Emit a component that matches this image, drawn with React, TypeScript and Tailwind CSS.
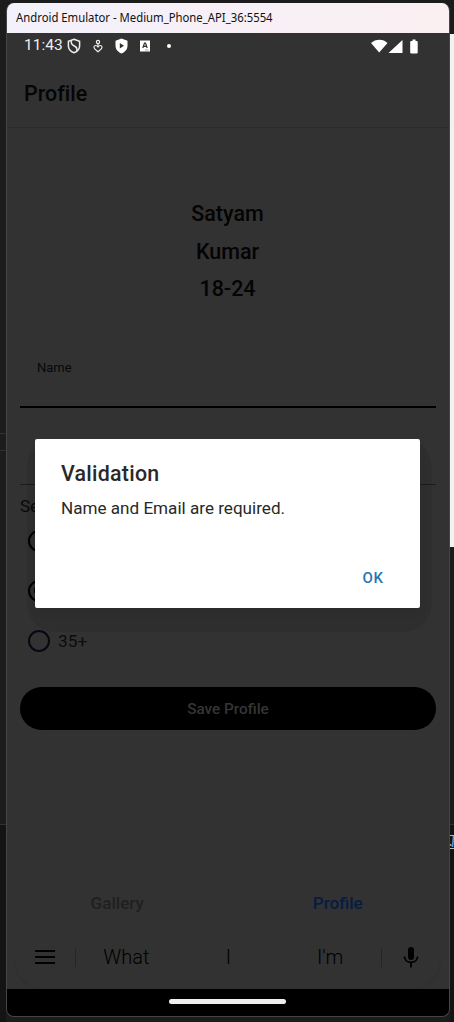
const row = "flex shrink-0 items-center";

function StatusBar() {
  return (
    <div className="flex h-[25px] shrink-0 items-center pl-[17px] pr-[30px] text-[#eeeeee]">
      <span className="w-[39px] whitespace-nowrap text-[15.5px] leading-[25px]">11:43</span>
      <svg className="ml-[4px] h-[16px] w-[14px]" viewBox="0 0 14 16" fill="none" stroke="currentColor" strokeWidth="1.5">
        <path d="M7 1.2 12.6 3.2V8c0 3.1-2.2 5.5-5.6 6.8C3.6 13.5 1.4 11.1 1.4 8V3.2Z" />
        <path d="M4.200 2.400C3.800 5.500 5 7 7.300 8S10.400 10.500 9.800 13" />
      </svg>
      <svg className="ml-[12px] h-[14px] w-[10px]" viewBox="0 0 10 14" fill="none" stroke="currentColor" strokeWidth="1.2">
        <circle cx="5" cy="3" r="1.6" />
        <path d="M5 4.700v2M5 8C3.500 5.700 1 6.300 1 8.200 1 10.200 3 11 5 12.700c2-1.700 4-2.500 4-4.500C9 6.300 6.500 5.700 5 8Z" />
      </svg>
      <svg className="ml-[12px] h-[16px] w-[13px]" viewBox="0 0 13 16">
        <path d="M6.5.5 12.5 2.800V7.500c0 4-2.500 6.500-6 8-3.500-1.500-6-4-6-8V2.800Z" fill="#fff" />
        <path d="m4.800 5 4.200 2.700-4.200 2.700Z" fill="#323232" />
      </svg>
      <svg className="ml-[12px] h-[12px] w-[10px]" viewBox="0 0 10 12">
        <path d="M0 .5h10v11H0Z" fill="#fff" />
        <path d="m2.800 8 1.700-5h1l1.700 5M3.500 6.400h3" fill="none" stroke="#323232" strokeWidth="1.200" />
        <path d="M5 10h3.500" stroke="#9a9a9a" strokeWidth=".8" />
      </svg>
      <span className="ml-[17px] size-[4px] rounded-full bg-white" />
      <svg className="ml-auto h-[16px] w-[49px]" viewBox="0 0 49 16" fill="#fff">
        <path d="M1 5.100C5.500.500 13.500.500 17.500 5.100L9.200 14.600ZM32.500 2v13H18.500ZM42.500 1.500h3v1.500h1.200q1 0 1 1v10.500q0 1-1 1h-5.500q-1 0-1-1V4q0-1 1-1H42.500Z" />
      </svg>
    </div>
  );
}

function Radio({ label, checked = false }: { label?: string; checked?: boolean }) {
  return (
    <div className={`${row} h-[50px] pl-[21px] text-[17.3px] text-[#0c0c0c]`}>
      <span className={`flex size-[22px] items-center justify-center rounded-full border-2 ${label ? "border-[#080814]" : "border-black"}`}>
        {checked && <span className="size-[11px] rounded-full bg-black" />}
      </span>
      {label && <span className="ml-[8px] pt-[2px]">{label}</span>}
    </div>
  );
}

function Suggestions() {
  return (
    <div className="relative flex h-[63px] shrink-0 items-center text-[20px] font-light text-black">
      <svg className="ml-[28px] h-[14px] w-[20px]" viewBox="0 0 20 14" stroke="#000" strokeWidth="2">
        <path d="M0 1h20M0 7h20M0 13h20" />
      </svg>
      <span className="ml-[20px] h-[19px] w-px bg-[#242429]" />
      <div className="grid h-full flex-1 grid-cols-3 items-center text-center">
        <span className="-ml-[1px]">What</span>
        <span>I</span>
        <span>I'm</span>
      </div>
      <span className="h-[19px] w-px bg-[#242429]" />
      <svg className="ml-[21px] mr-[30px] h-[22px] w-[16px]" viewBox="0 0 16 22">
        <rect x="5" y="1" width="6" height="13" rx="3" />
        <path d="M1.500 10.500c0 7.800 13 7.800 13 0M8 17v4.500" fill="none" stroke="#000" strokeWidth="1.800" />
      </svg>
      <span className="pointer-events-none absolute bottom-0 left-[7px] size-[28px] rounded-bl-[28px] border-b border-l border-[#2f2f2f]" />
      <span className="pointer-events-none absolute bottom-0 right-[8px] size-[28px] rounded-br-[28px] border-b border-r border-[#2f2f2f]" />
    </div>
  );
}

function ValidationDialog() {
  return (
    <div className="absolute left-[20px] top-[436px] h-[193px] w-[405px] rounded-[28px] bg-black/7 px-[8px]">
      <div
        role="dialog"
        className="flex h-[169px] w-[385px] flex-col rounded-[2px] bg-white px-[26px] pt-[20px] text-[#292929] shadow-[0_5px_8px_rgba(0,0,0,0.05)]"
      >
        <h2 className="text-[21.4px] font-medium leading-[30px] tracking-[0.25px]">Validation</h2>
        <p className="mt-[6px] text-[17.1px] leading-[26px]">Name and Email are required.</p>
        <button className="ml-auto mr-[10px] mt-[47px] text-[15px] font-medium leading-[20px] tracking-[0.9px] text-[#2476b5]">OK</button>
      </div>
    </div>
  );
}

export default function App() {
  return (
    <div className="relative flex h-[1022px] w-[454px] overflow-hidden bg-[#1c1c1c] font-['Roboto',sans-serif]">
      <div className="flex w-[6px] shrink-0 flex-col">
        <span className="h-[434px] border-b border-[#303030]" />
        <span className="h-[17px] border-b border-[#303030]" />
        <span className="h-[374px] border-b border-[#303030]" />
        <span className="flex-1 bg-[#141414]" />
      </div>
      <div className="relative mt-[3px] flex h-[1014px] w-[444px] shrink-0 flex-col overflow-hidden rounded-[8px] border-x border-b border-[#454545] bg-[#323232]">
        <div className="flex h-[30px] shrink-0 items-center bg-gradient-to-r from-[#f3f1fb] to-[#faeff1] pl-[9px] font-['Noto_Sans',sans-serif] text-[12px] text-[#111111]">
          <span className="origin-left scale-x-[0.943] whitespace-nowrap">Android Emulator - Medium_Phone_API_36:5554</span>
        </div>
        <StatusBar />
        <header className={`${row} h-[70px] border-b border-[#2b2b2b] pl-[17px] pt-[3px] text-[21.4px] font-medium tracking-[0.05px] text-[#050505]`}>Profile</header>
        <div className="mt-[67px] flex shrink-0 flex-col items-center pr-[1px] text-[21.5px] font-medium leading-[37.5px] text-[#040404]">
          <span>Satyam</span>
          <span>Kumar</span>
          <span>18-24</span>
        </div>
        <div className="mx-[13px] mt-[48px] h-[52px] shrink-0 border-b-2 border-black pl-[17px] text-[13px] leading-[24px] text-[#080808]">Name</div>
        <div className="mx-[13px] h-[77px] shrink-0 border-b border-[#1c1c1c]" />
        <div className="h-[31px] shrink-0 pl-[13px] pt-[9px] text-[17px] leading-[24px] text-[#080808]">Se</div>
        <Radio />
        <Radio checked />
        <Radio label="35+" />
        <button className="mx-[13px] mt-[21px] h-[43px] shrink-0 rounded-full bg-black pt-[2px] text-[15.3px] font-medium text-[#353535]">Save Profile</button>
        <nav className="mt-[152px] flex h-[44px] shrink-0 items-center pr-[1px] pt-[1px] text-center text-[17.1px] font-medium">
          <span className="flex-1 text-[#202020]">Gallery</span>
          <span className="flex-1 text-[#051d40]">Profile</span>
        </nav>
        <Suggestions />
        <div className="flex flex-1 items-center justify-center bg-black pb-px pr-[2px]">
          <span className="h-[5px] w-[117px] rounded-full bg-[#eeeeee]" />
        </div>
        <ValidationDialog />
      </div>
      <div className="flex flex-1 flex-col pt-[34px]">
        <span className="h-[513px] bg-[#f2f2f2]" />
        <span className="h-[278px] border-b border-[#303030]" />
        <span className="flex flex-1 flex-col bg-[#141414] pt-[10px]">
          <svg className="h-[14px] w-[4px]" viewBox="0 0 4 14" fill="none">
            <path d="M0 .500h4M0 13.500h4" stroke="#b8b8b8" />
            <path d="M0 10h1.500" stroke="#a89878" strokeWidth="2" />
            <path d="M3.500 1 2.500 12" stroke="#4ba3d8" strokeWidth="1.500" />
          </svg>
        </span>
      </div>
    </div>
  );
}
